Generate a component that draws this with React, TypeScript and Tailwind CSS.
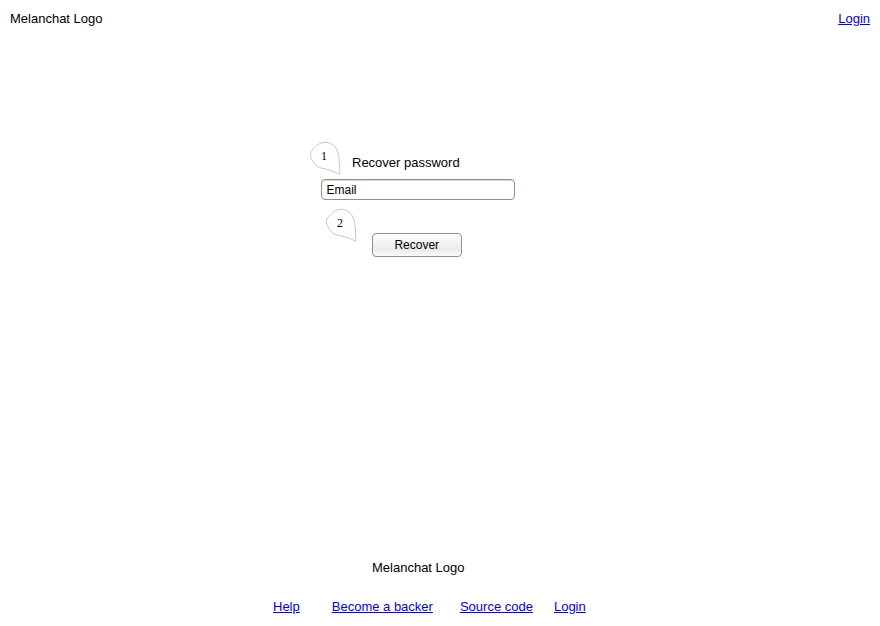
import type { ReactNode } from "react";

function Link({ children, className = "" }: { children: ReactNode; className?: string }) {
  return (
    <a href="#" className={`text-[#0000ff] underline ${className}`}>
      {children}
    </a>
  );
}

function Marker({ label, className }: { label: string; className: string }) {
  return (
    <span className={`absolute h-[34px] w-8 ${className}`}>
      <svg className="h-[34px] w-8" viewBox="0 0 32 34" fill="white" stroke="#c8c8c8" aria-hidden="true">
        <path d="M31 33.3 C30.5 25 30.5 18 29 12 C27 5 22 1.5 16 1.3 C11 1.3 7.5 4.5 4.2 8 C0.8 12 0.8 15 2.8 18.5 C5.5 23 8 26.3 12 27 C20 28.5 25 30.5 31 33.3 Z" />
      </svg>
      <span className="absolute left-3 top-2 font-['Liberation_Serif',serif] text-[12px] leading-[15px]">
        {label}
      </span>
    </span>
  );
}

export default function App() {
  return (
    <div className="flex h-[626px] w-[880px] flex-col overflow-hidden bg-white font-['Liberation_Sans',Arial,sans-serif] text-[13px] leading-[15px] text-black">
      <header className="flex justify-between px-[10px] pt-[11px]">
        <span>Melanchat Logo</span>
        <Link>Login</Link>
      </header>

      <main className="relative ml-[309px] mt-[115px] flex w-[220px] flex-col pt-[14px]">
        <Marker label="1" className="left-0 top-0" />
        <h1 className="ml-[43px]">Recover password</h1>
        <input
          type="text"
          defaultValue="Email"
          aria-label="Email"
          className="ml-3 mt-[9px] h-[21px] w-[194px] rounded-[4px] border border-[#9c8e7e] bg-white px-[4.5px] text-[12px] shadow-[inset_0_1px_1px_#d8d8d8] outline-none"
        />
        <Marker label="2" className="left-4 top-[67px]" />
        <button className="ml-[63px] mt-[33px] h-6 w-[90px] rounded-[4px] border border-[#9c8e7e] bg-linear-to-b from-[#fdfdfd] from-0% via-[#ebebeb] via-70% to-[#fafafa] pr-[0.5px] text-[12px]">
          Recover
        </button>
      </main>

      <footer className="mt-auto pb-3">
        <p className="ml-[372px]">Melanchat Logo</p>
        <nav className="ml-[273px] mt-6 flex">
          <Link className="mr-8">Help</Link>
          <Link className="mr-[27px]">Become a backer</Link>
          <Link className="mr-[21px]">Source code</Link>
          <Link>Login</Link>
        </nav>
      </footer>
    </div>
  );
}
